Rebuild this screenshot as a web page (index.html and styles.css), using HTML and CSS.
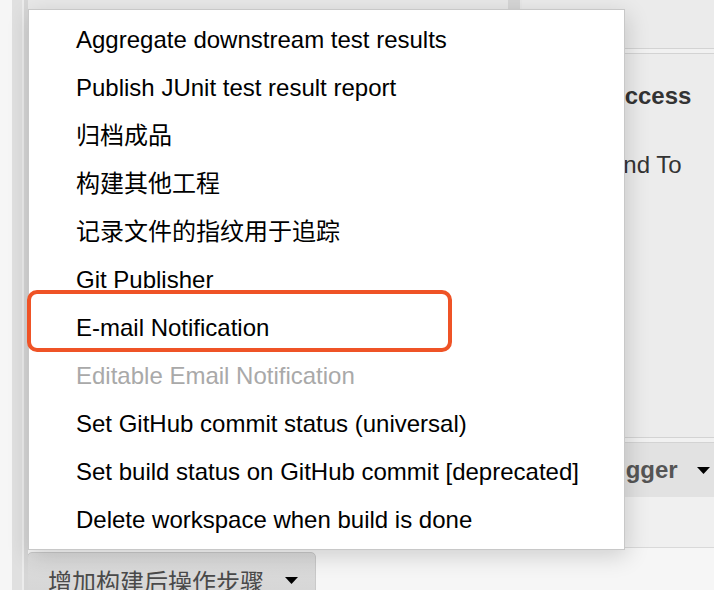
FILE: index.html
```html
<!DOCTYPE html>
<html lang="zh">
<head>
<meta charset="utf-8">
<title>Post-build actions</title>
<link rel="stylesheet" href="styles.css">
</head>
<body>
<div class="page">
  <div class="gutter"></div>
  <div class="rail"></div>
  <div class="main">
    <div class="top">
      <div class="top-left"></div>
      <div class="top-split"></div>
      <div class="top-right"></div>
    </div>
    <div class="rule"></div>
    <div class="trigger">
      <div class="trigger-body">
        <div class="trigger-title">Success</div>
        <div class="trigger-row">Send To</div>
      </div>
      <div class="scrollbar"></div>
    </div>
    <div class="rule"></div>
    <div class="add-row">
      <button class="btn-add">Add Trigger
        <svg class="caret" width="13" height="7" viewBox="0 0 13 7"><polygon points="0,0 13,0 6.5,7" fill="#000"/></svg>
      </button>
    </div>
    <div class="after"></div>
    <div class="bottom">
      <button class="btn-post">增加构建后操作步骤
        <svg class="caret" width="13" height="7" viewBox="0 0 13 7"><polygon points="0,0 13,0 6.5,7" fill="#000"/></svg>
      </button>
    </div>
  </div>

  <ul class="menu">
    <li class="item">Aggregate downstream test results</li>
    <li class="item">Publish JUnit test result report</li>
    <li class="item">归档成品</li>
    <li class="item">构建其他工程</li>
    <li class="item">记录文件的指纹用于追踪</li>
    <li class="item">Git Publisher</li>
    <li class="item">E-mail Notification</li>
    <li class="item item-disabled">Editable Email Notification</li>
    <li class="item">Set GitHub commit status (universal)</li>
    <li class="item">Set build status on GitHub commit [deprecated]</li>
    <li class="item">Delete workspace when build is done</li>
  </ul>
  <div class="highlight"></div>
</div>
</body>
</html>
```

FILE: styles.css
```css
* { box-sizing: border-box; }

html, body {
  margin: 0;
  padding: 0;
}

body {
  font-family: "Liberation Sans", "Noto Sans CJK SC", sans-serif;
  background: #f6f6f6;
  overflow: hidden;
}

.page {
  position: relative;
  display: flex;
  width: 714px;
  height: 590px;
  overflow: hidden;
}

.gutter {
  width: 12px;
  flex: none;
  background: #f6f6f6;
}

.rail {
  width: 16px;
  flex: none;
  background: linear-gradient(to right, #e0e0e0 0, #e0e0e0 10px, #ececec 10px, #ececec 12px, #d6d6d6 12px, #d6d6d6 16px);
}

.main {
  flex: 1;
  display: flex;
  flex-direction: column;
  background: #ececec;
  min-height: 0;
}

.main > * { flex-shrink: 0; }

.top {
  height: 48px;
  display: flex;
  background: #e8e8e8;
}

.top-left { width: 480px; }

.top-split {
  width: 14px;
  background: #d6d6d6;
  border-right: 2px solid #e8e8e8;
  box-shadow: 4px 0 0 -2px #d9d9d9;
}

.top-right {
  flex: 1;
  background: #ebebeb;
}

.rule {
  height: 6px;
  border-top: 1px solid #d3d3d3;
  border-bottom: 1px solid #d3d3d3;
  background: #f1f1f1;
}

.trigger {
  height: 383px;
  display: flex;
  justify-content: space-between;
  background: #ececec;
}

.trigger-body {
  padding-left: 566px;
  color: #333;
  font-size: 24px;
}

.trigger-title {
  font-weight: bold;
  line-height: 28px;
  margin-top: 28px;
}

.trigger-row {
  line-height: 28px;
  margin-top: 41px;
}

.scrollbar {
  width: 4px;
  height: 135px;
  margin-top: 84px;
  background: #d7d7d7;
}

.add-row {
  height: 54px;
  display: flex;
  padding-left: 497px;
  background: #e2e2e2;
}

.btn-add {
  display: flex;
  align-items: center;
  gap: 19px;
  height: 54px;
  padding: 0 18px;
  border: none;
  background: #e2e2e2;
  font-family: "Liberation Sans", sans-serif;
  font-weight: bold;
  font-size: 24px;
  color: #555;
  white-space: nowrap;
}

.after {
  height: 51px;
  background: #f0f0f0;
  border-bottom: 1px solid #d9d9d9;
}

.bottom {
  flex: 1 1 auto;
  min-height: 0;
  overflow: hidden;
  padding-top: 4px;
  background: #f6f6f6;
}

.btn-post {
  display: flex;
  align-items: center;
  gap: 21px;
  margin-left: -1px;
  height: 58px;
  width: 289px;
  padding: 0 0 2px 20px;
  border: 1px solid #c9c9c9;
  border-radius: 5px 5px 0 0;
  background: linear-gradient(#dcdcdc, #d4d4d4);
  font-family: "Liberation Sans", "Noto Sans CJK SC", sans-serif;
  font-size: 24px;
  color: #4a4a4a;
  white-space: nowrap;
}

.caret { flex: none; }

.menu {
  position: absolute;
  left: 28px;
  top: 9px;
  width: 597px;
  margin: 0;
  padding: 6px 0 5px;
  list-style: none;
  background: #fff;
  border: 1px solid #c8c8c8;
  box-shadow: 2px 6px 22px rgba(0, 0, 0, 0.16);
}

.item {
  height: 48px;
  line-height: 48px;
  padding-left: 47px;
  font-size: 24px;
  color: #000;
  white-space: nowrap;
}

.item-disabled { color: #a9a9a9; }

.highlight {
  position: absolute;
  left: 27px;
  top: 290px;
  width: 425px;
  height: 62px;
  border: 4px solid #ef5326;
  border-radius: 10px;
}
```
